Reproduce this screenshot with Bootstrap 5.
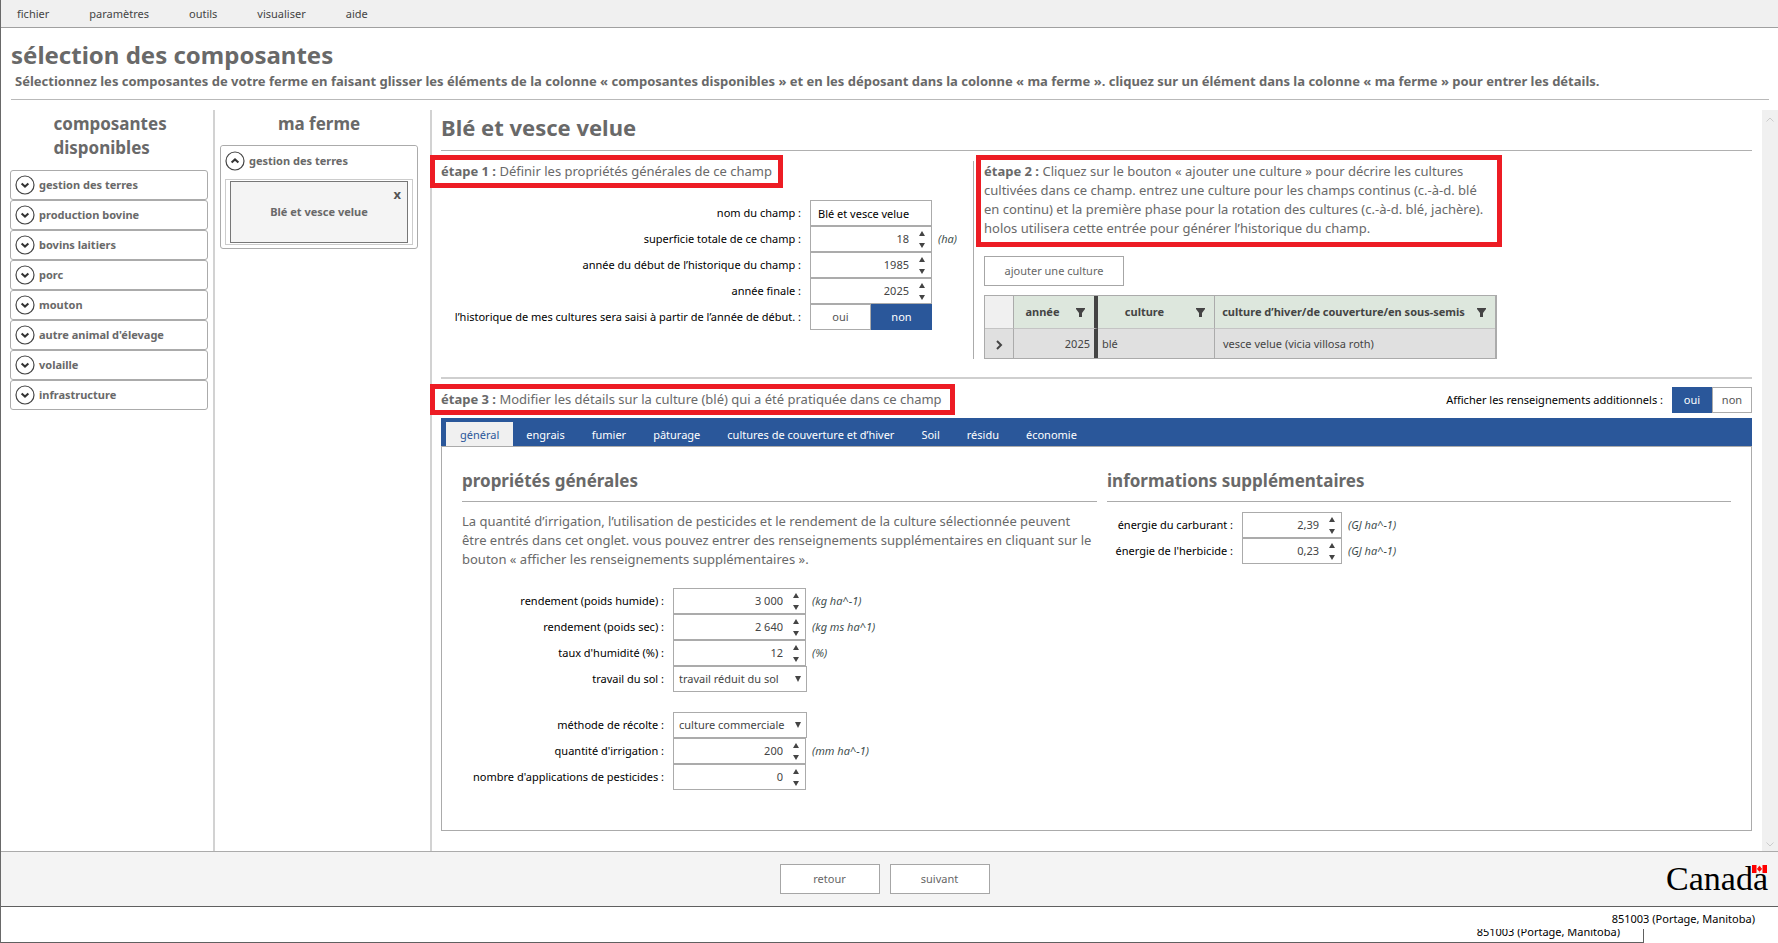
<!DOCTYPE html>
<html lang="fr">
<head>
<meta charset="utf-8">
<meta name="viewport" content="width=device-width, initial-scale=1">
<title>Holos – sélection des composantes</title>
<link href="https://cdn.jsdelivr.net/npm/bootstrap@5.3.0/dist/css/bootstrap.min.css" rel="stylesheet">
<style>
  :root { --ink: #696969; --line: #ababab; --brand: #2a579a; --alert: #ed1c24; }
  body { font-family: "Noto Sans", "Open Sans", sans-serif; font-size: 11px; line-height: 20px; color: #000; background: #fff; border-left: 1px solid #696969; }
  button, input, select { font: inherit; color: #444; }
  h1, h2, h3, p { margin: 0; }
  h1, h2, h3 { font-weight: 700; color: var(--ink); }

  .menu-bar { height: 28px; background: #f0f0f0; border-bottom: 1px solid #a0a0a0; padding-left: 16px; gap: 40px; }
  .menu-bar a { color: #444; text-decoration: none; }
  .page-head { padding: 10px 9px 0 10px; }
  .page-head h1 { font-size: 24px; line-height: 34px; }
  .page-head p { font-size: 13px; line-height: 18px; font-weight: 700; color: var(--ink); padding: 0 4px 9px; border-bottom: 1px solid #b9b9b9; }

  .workspace { padding-top: 10px; }
  .side { flex: 0 0 auto; border-right: 2px solid #d2d2d2; padding: 2px 5px 0; }
  .side-available { width: 214px; padding-left: 9px; }
  .side-farm { width: 217px; padding-right: 12px; }
  .side h2 { font-size: 17px; line-height: 24px; margin-bottom: 10px; }
  .side-farm h2 { margin-bottom: 9px; }
  .group-head { height: 30px; width: 100%; padding: 0 4px; gap: 4px; background: #fff; border: 1px solid var(--line); border-radius: 3px; font-weight: 700; color: var(--ink); text-align: left; }
  .group-open { border: 1px solid var(--line); border-radius: 3px; padding-bottom: 3px; }
  .group-open .group-head { border: 0; margin-bottom: 3px; }
  .slot { margin: 0 4px; padding: 1px 4px; border: 1px solid #ccc; }
  .farm-item { position: relative; height: 62px; background: #f4f4f4; border: 1px solid #777; font-weight: 700; color: var(--ink); }
  .farm-item button { position: absolute; top: 2px; right: 6px; border: 0; background: none; padding: 0; font-size: 13px; font-weight: 700; color: #555; }

  .editor { border-left: 2px solid #d2d2d2; margin-left: -2px; padding: 3px 10px 20px 9px; min-width: 0; }
  .editor > h2 { font-size: 22px; line-height: 28px; padding-bottom: 9px; border-bottom: 1px solid #b0b0b0; margin-bottom: 4px; }
  .step { font-size: 13px; line-height: 19px; color: var(--ink); border: 5px solid var(--alert); padding: 2px 6px; margin-left: -11px; width: fit-content; background: #fff; position: relative; }
  .step-slim { padding-top: 1px; padding-bottom: 1px; padding-right: 8px; }
  .steps { display: grid; grid-template-columns: 532px 1px 1fr; }
  .steps-rule { background: var(--line); margin-top: 6px; }
  .step-two { padding-left: 10px; }
  .step-two .step { margin-left: -8px; padding: 2px 14px 4px 3px; }
  .rule-soft { height: 2px; background: #cfcfcf; margin: 18px 0 5px; }

  .fields { display: grid; grid-auto-rows: 26px; column-gap: 9px; align-items: center; }
  .fields label, .fields .lbl { text-align: right; white-space: nowrap; }
  .fields-field { grid-template-columns: 360px 122px 1fr; margin-top: 12px; }
  .fields-crop { grid-template-columns: 202px 133px 1fr; }
  .fields-info { grid-template-columns: 126px 100px 1fr; margin-top: 10px; }
  .fields i { color: #3f4f4f; margin-left: -3px; }
  .txt, .spin, .pick { height: 26px; width: 100%; border: 1px solid var(--line); background: #fff; border-radius: 0; }
  .txt { padding: 0 7px; color: #000; }
  .spin { display: flex; }
  .spin input { border: 0; flex: 1; min-width: 0; text-align: right; padding: 0 8px 0 0; background: none; }
  .spin span { width: 14px; display: flex; flex-direction: column; padding: 0 4px 0 0; }
  .spin button { border: 0; background: none; padding: 0; flex: 1; display: flex; align-items: center; justify-content: center; }
  .spin svg { display: block; fill: #444; }
  .pick { appearance: none; width: 134px; padding: 0 16px 0 5px; background: #fff url("data:image/svg+xml,%3Csvg xmlns='http://www.w3.org/2000/svg' width='6' height='6'%3E%3Cpath d='M0 0h6L3 6z' fill='%23444'/%3E%3C/svg%3E") no-repeat right 5px top 9px; }
  .toggle { display: flex; height: 26px; }
  .toggle label { flex: 1; display: flex; align-items: center; justify-content: center; border: 1px solid var(--line); color: #555; }
  .toggle input:checked + label { background: var(--brand); border-color: var(--brand); color: #fff; }
  .toggle-sm { width: 80px; }
  .plain { height: 30px; background: #fff; border: 1px solid #a6a6a6; color: #666; padding: 0; }

  .crops { table-layout: fixed; width: 513px; border-collapse: separate; border-spacing: 0; border: 1px solid var(--line); border-right-width: 2px; color: #444; }
  .crops th, .crops td { padding: 0; border-right: 1px solid var(--line); }
  .crops th:last-child, .crops td:last-child { border-right: 0; }
  .crops th { height: 33px; background: #dde7dd; border-bottom: 1px solid #c4c4c4; white-space: nowrap; }
  .crops th:first-child { background: #f0f0f0; }
  .crops td { height: 29px; background: #e0e0e0; }
  .crops tr > .frozen { border-right: 4px solid #444; }
  .crops .head { display: flex; align-items: center; text-align: center; padding-right: 9px; }
  .crops .head span { flex: 1; padding-right: 5px; }

  .tab-strip { background: var(--brand); height: 28px; padding: 4px 5px 0; margin-top: 3px; }
  .tab-strip button { border: 0; background: none; color: #fff; padding: 1px 14px 0 13px; }
  .tab-strip .active { background: #f0f0f0; color: var(--brand); padding-left: 14px; }
  .sheet { display: grid; grid-template-columns: 635fr 624fr; column-gap: 10px; border: 1px solid var(--line); padding: 22px 20px 38px; align-content: start; }
  .sheet h3 { font-size: 17px; line-height: 24px; padding-bottom: 8px; border-bottom: 1px solid var(--line); }
  .sheet p { font-size: 13px; line-height: 19px; color: var(--ink); margin: 10px 0 19px; }

  .gutter { flex: 0 0 16px; background: #f0f0f0; padding: 7px 0 4px; }
  .foot { height: 55px; background: #f4f4f4; border-top: 1px solid var(--line); display: grid; grid-template-columns: 1fr auto 1fr; align-items: center; padding-right: 10px; }
  .foot .plain { width: 100px; }
  .wordmark { position: relative; justify-self: end; font: 34px/40px "Liberation Serif", serif; color: #000; }
  .wordmark svg { position: absolute; right: 1px; top: 6px; }
  .status { height: 23px; border-top: 1px solid #606060; padding-right: 23px; font-size: 11px; line-height: 24px; text-align: right; }
  .status-under { height: 14px; margin-right: 134px; padding-right: 23px; border: solid #606060; border-width: 0 1px 1px 0; line-height: 6px; text-align: right; overflow: hidden; }
</style>
</head>
<body class="d-flex flex-column min-vh-100">
<svg class="d-none">
  <symbol id="up" viewBox="0 0 6 5"><path d="M3 0l3 5H0z"/></symbol>
  <symbol id="down" viewBox="0 0 6 5"><path d="M0 0h6L3 5z"/></symbol>
  <symbol id="open" viewBox="0 0 20 20"><circle cx="10" cy="10" r="9" fill="#fff" stroke="#444" stroke-width="1.2"/><path d="M6.6 8.4l3.4 3.2 3.4-3.2" fill="none" stroke="#333" stroke-width="2"/></symbol>
  <symbol id="close" viewBox="0 0 20 20"><circle cx="10" cy="10" r="9" fill="#fff" stroke="#444" stroke-width="1.2"/><path d="M6.6 11.6L10 8.4l3.4 3.2" fill="none" stroke="#333" stroke-width="2"/></symbol>
  <symbol id="funnel" viewBox="0 0 9 9"><path d="M0 0h9v1L6 5v4H3V5L0 1z" fill="#444"/></symbol>
</svg>

<nav class="menu-bar d-flex align-items-center">
  <a href="#">fichier</a><a href="#">paramètres</a><a href="#">outils</a><a href="#">visualiser</a><a href="#">aide</a>
</nav>

<header class="page-head">
  <h1>sélection des composantes</h1>
  <p>Sélectionnez les composantes de votre ferme en faisant glisser les éléments de la colonne « composantes disponibles » et en les déposant dans la colonne « ma ferme ». cliquez sur un élément dans la colonne « ma ferme » pour entrer les détails.</p>
</header>

<div class="workspace d-flex flex-grow-1">
  <aside class="side side-available">
    <h2 class="mx-auto" style="width: 111px">composantes disponibles</h2>
    <button class="group-head d-flex align-items-center"><svg width="20" height="20"><use href="#open"/></svg>gestion des terres</button>
    <button class="group-head d-flex align-items-center"><svg width="20" height="20"><use href="#open"/></svg>production bovine</button>
    <button class="group-head d-flex align-items-center"><svg width="20" height="20"><use href="#open"/></svg>bovins laitiers</button>
    <button class="group-head d-flex align-items-center"><svg width="20" height="20"><use href="#open"/></svg>porc</button>
    <button class="group-head d-flex align-items-center"><svg width="20" height="20"><use href="#open"/></svg>mouton</button>
    <button class="group-head d-flex align-items-center"><svg width="20" height="20"><use href="#open"/></svg>autre animal d'élevage</button>
    <button class="group-head d-flex align-items-center"><svg width="20" height="20"><use href="#open"/></svg>volaille</button>
    <button class="group-head d-flex align-items-center"><svg width="20" height="20"><use href="#open"/></svg>infrastructure</button>
  </aside>

  <aside class="side side-farm">
    <h2 class="text-center">ma ferme</h2>
    <div class="group-open">
      <button class="group-head d-flex align-items-center"><svg width="20" height="20"><use href="#close"/></svg>gestion des terres</button>
      <div class="slot">
        <div class="farm-item d-flex align-items-center justify-content-center">Blé et vesce velue<button aria-label="retirer">x</button></div>
      </div>
    </div>
  </aside>

  <main class="editor flex-grow-1 d-flex flex-column">
    <h2>Blé et vesce velue</h2>
    <div class="steps">
      <section>
        <div class="step"><b>étape 1 :</b> Définir les propriétés générales de ce champ</div>
        <div class="fields fields-field">
          <label for="nom">nom du champ :</label><input class="txt" id="nom" value="Blé et vesce velue"><span></span>
          <label for="sup">superficie totale de ce champ :</label><div class="spin"><input id="sup" value="18"><span><button aria-label="plus"><svg width="6" height="5"><use href="#up"/></svg></button><button aria-label="moins"><svg width="6" height="5"><use href="#down"/></svg></button></span></div><i>(ha)</i>
          <label for="deb">année du début de l’historique du champ :</label><div class="spin"><input id="deb" value="1985"><span><button aria-label="plus"><svg width="6" height="5"><use href="#up"/></svg></button><button aria-label="moins"><svg width="6" height="5"><use href="#down"/></svg></button></span></div><span></span>
          <label for="fin">année finale :</label><div class="spin"><input id="fin" value="2025"><span><button aria-label="plus"><svg width="6" height="5"><use href="#up"/></svg></button><button aria-label="moins"><svg width="6" height="5"><use href="#down"/></svg></button></span></div><span></span>
          <span class="lbl" id="hist">l’historique de mes cultures sera saisi à partir de l’année de début. :</span>
          <div class="toggle" role="radiogroup" aria-labelledby="hist">
            <input class="btn-check" type="radio" name="hist" id="hist-oui"><label for="hist-oui">oui</label>
            <input class="btn-check" type="radio" name="hist" id="hist-non" checked><label for="hist-non">non</label>
          </div>
        </div>
      </section>
      <div class="steps-rule"></div>
      <section class="step-two">
        <div class="step"><b>étape 2 :</b> Cliquez sur le bouton « ajouter une culture » pour décrire les cultures<br>cultivées dans ce champ. entrez une culture pour les champs continus (c.-à-d. blé<br>en continu) et la première phase pour la rotation des cultures (c.-à-d. blé, jachère).<br>holos utilisera cette entrée pour générer l’historique du champ.</div>
        <button class="plain d-block" style="width: 140px; margin: 9px 0">ajouter une culture</button>
        <table class="crops">
          <colgroup><col style="width: 29px"><col style="width: 84px"><col style="width: 117px"><col></colgroup>
          <thead><tr>
            <th></th>
            <th class="frozen"><div class="head"><span>année</span><svg width="9" height="9"><use href="#funnel"/></svg></div></th>
            <th><div class="head"><span>culture</span><svg width="9" height="9"><use href="#funnel"/></svg></div></th>
            <th><div class="head"><span>culture d’hiver/de couverture/en sous-semis</span><svg width="9" height="9"><use href="#funnel"/></svg></div></th>
          </tr></thead>
          <tbody><tr>
            <td class="text-center"><svg width="7" height="10" viewBox="0 0 7 10"><path d="M1 1l4 4-4 4" fill="none" stroke="#444" stroke-width="2"/></svg></td>
            <td class="frozen text-end pe-1">2025</td>
            <td class="ps-1">blé</td>
            <td class="ps-2">vesce velue (vicia villosa roth)</td>
          </tr></tbody>
        </table>
      </section>
    </div>

    <div class="rule-soft"></div>

    <div class="d-flex align-items-center justify-content-between">
      <div class="step step-slim"><b>étape 3 :</b> Modifier les détails sur la culture (blé) qui a été pratiquée dans ce champ</div>
      <div class="d-flex align-items-center" style="gap: 9px">
        <span id="more">Afficher les renseignements additionnels :</span>
        <div class="toggle toggle-sm" role="radiogroup" aria-labelledby="more">
          <input class="btn-check" type="radio" name="more" id="more-oui" checked><label for="more-oui">oui</label>
          <input class="btn-check" type="radio" name="more" id="more-non"><label for="more-non">non</label>
        </div>
      </div>
    </div>

    <div class="tab-strip d-flex" role="tablist">
      <button class="active" role="tab">général</button><button role="tab">engrais</button><button role="tab">fumier</button><button role="tab">pâturage</button><button role="tab">cultures de couverture et d’hiver</button><button role="tab">Soil</button><button role="tab">résidu</button><button role="tab">économie</button>
    </div>

    <div class="sheet flex-grow-1">
      <section>
        <h3>propriétés générales</h3>
        <p>La quantité d’irrigation, l’utilisation de pesticides et le rendement de la culture sélectionnée peuvent<br>être entrés dans cet onglet. vous pouvez entrer des renseignements supplémentaires en cliquant sur le<br>bouton « afficher les renseignements supplémentaires ».</p>
        <div class="fields fields-crop">
          <label for="hum">rendement (poids humide) :</label><div class="spin"><input id="hum" value="3 000"><span><button aria-label="plus"><svg width="6" height="5"><use href="#up"/></svg></button><button aria-label="moins"><svg width="6" height="5"><use href="#down"/></svg></button></span></div><i>(kg ha^-1)</i>
          <label for="sec">rendement (poids sec) :</label><div class="spin"><input id="sec" value="2 640"><span><button aria-label="plus"><svg width="6" height="5"><use href="#up"/></svg></button><button aria-label="moins"><svg width="6" height="5"><use href="#down"/></svg></button></span></div><i>(kg ms ha^1)</i>
          <label for="taux">taux d'humidité (%) :</label><div class="spin"><input id="taux" value="12"><span><button aria-label="plus"><svg width="6" height="5"><use href="#up"/></svg></button><button aria-label="moins"><svg width="6" height="5"><use href="#down"/></svg></button></span></div><i>(%)</i>
          <label for="sol">travail du sol :</label><select class="pick" id="sol"><option>travail réduit du sol</option></select><span></span>
        </div>
        <div class="fields fields-crop" style="margin-top: 20px">
          <label for="rec">méthode de récolte :</label><select class="pick" id="rec"><option>culture commerciale</option></select><span></span>
          <label for="irr">quantité d'irrigation :</label><div class="spin"><input id="irr" value="200"><span><button aria-label="plus"><svg width="6" height="5"><use href="#up"/></svg></button><button aria-label="moins"><svg width="6" height="5"><use href="#down"/></svg></button></span></div><i>(mm ha^-1)</i>
          <label for="pest">nombre d'applications de pesticides :</label><div class="spin"><input id="pest" value="0"><span><button aria-label="plus"><svg width="6" height="5"><use href="#up"/></svg></button><button aria-label="moins"><svg width="6" height="5"><use href="#down"/></svg></button></span></div><span></span>
        </div>
      </section>
      <section>
        <h3>informations supplémentaires</h3>
        <div class="fields fields-info">
          <label for="carb">énergie du carburant :</label><div class="spin"><input id="carb" value="2,39"><span><button aria-label="plus"><svg width="6" height="5"><use href="#up"/></svg></button><button aria-label="moins"><svg width="6" height="5"><use href="#down"/></svg></button></span></div><i>(GJ ha^-1)</i>
          <label for="herb">énergie de l'herbicide :</label><div class="spin"><input id="herb" value="0,23"><span><button aria-label="plus"><svg width="6" height="5"><use href="#up"/></svg></button><button aria-label="moins"><svg width="6" height="5"><use href="#down"/></svg></button></span></div><i>(GJ ha^-1)</i>
        </div>
      </section>
    </div>
  </main>

  <div class="gutter d-flex flex-column align-items-center justify-content-between" aria-hidden="true">
    <svg width="8" height="5" fill="none" stroke="#ccc"><path d="M.5 4.5L4 1l3.500 3.500"/></svg>
    <svg width="8" height="5" fill="none" stroke="#ccc"><path d="M.5.5L4 4 7.500.5"/></svg>
  </div>
</div>

<footer>
  <div class="foot">
    <span></span>
    <div class="d-flex" style="gap: 10px"><button class="plain">retour</button><button class="plain">suivant</button></div>
    <div class="wordmark">Canada<svg width="15" height="8" viewBox="0 0 30 16"><path d="M0 0h9v16H0zM21 0h9v16h-9z" fill="#f00"/><path d="M15 1l1.500 3 1.500-1-.5 4 2-1 .5 2-3.500 4H15.500v3h-1v-3H13.500L10 8l.5-2 2 1-.5-4 1.500 1z" fill="#f00"/></svg></div>
  </div>
  <div class="status">851003 (Portage, Manitoba)</div>
  <div class="status-under">851003 (Portage, Manitoba)</div>
</footer>
<script src="https://cdn.jsdelivr.net/npm/bootstrap@5.3.0/dist/js/bootstrap.bundle.min.js"></script>
</body>
</html>
